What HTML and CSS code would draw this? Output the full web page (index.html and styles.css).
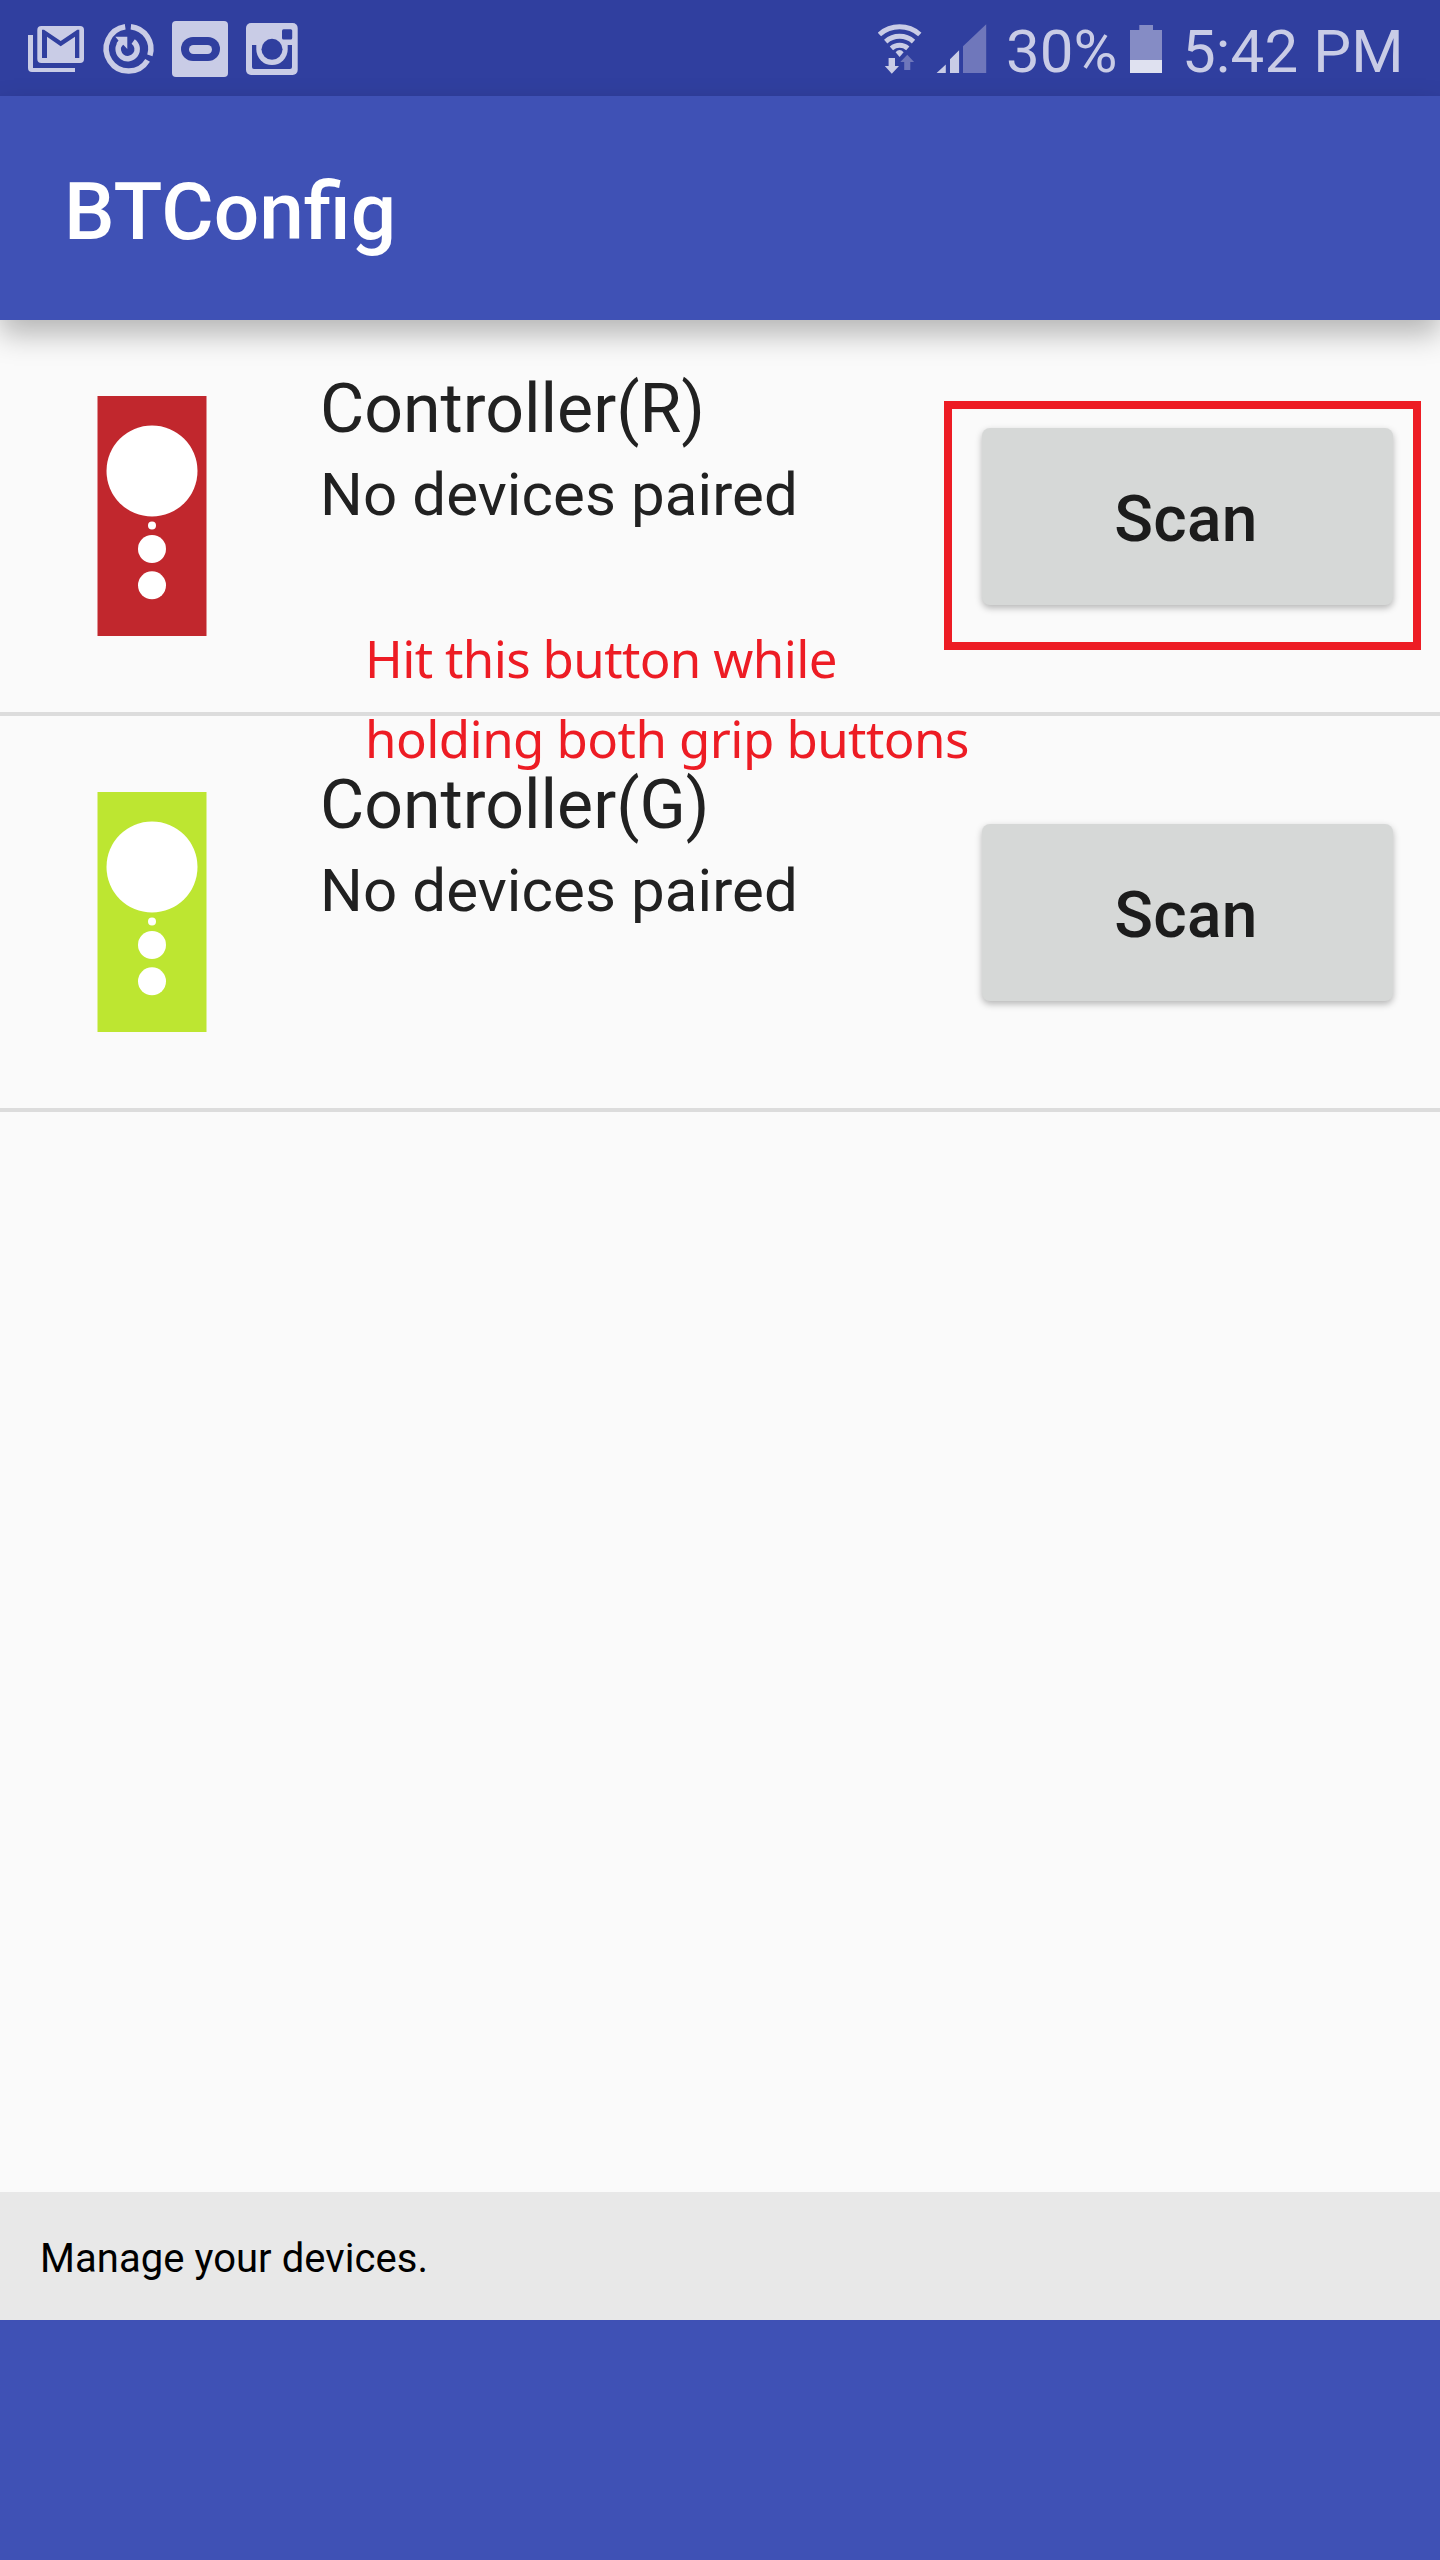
FILE: index.html
```html
<!DOCTYPE html>
<html lang="en">
<head>
<meta charset="utf-8">
<title>BTConfig</title>
<link rel="stylesheet" href="styles.css">
</head>
<body>
<div class="screen">
  <div class="status-bar">
    <div class="notifications">
      <svg class="icon" width="60" height="60" viewBox="26 19 60 60">
        <path class="lit" d="M28 35h5v33h42v4H32a4 4 0 0 1-4-4z"/>
        <rect class="lit" x="37.3" y="26" width="46.7" height="37" rx="4"/>
        <path class="ground" d="M42 29.7h2L60.7 41l16.600-11.300h2V58H75V36.700L60.700 46.300 47 36.700V58h-5z"/>
      </svg>
      <svg class="icon" width="60" height="60" viewBox="98 19 60 60">
        <path class="ring" d="M130.900 26.700a22.300 22.300 0 0 1 19 28.700M147.600 60.300A22.300 22.300 0 1 1 125.200 26.700"/>
        <path class="ring" d="M133.200 41.400A9.500 9.500 0 1 1 119.900 43.700"/>
        <path class="lit" d="M115.300 36.700h12v12.200l-4-4.200-3.300 3-3.500-4.500 2-2.700z"/>
      </svg>
      <svg class="icon" width="60" height="60" viewBox="170 19 60 60">
        <rect class="lit" x="172" y="21" width="56" height="56" rx="4"/>
        <rect class="ground" x="181" y="37" width="39" height="24" rx="12"/>
        <rect class="lit" x="189" y="45" width="23" height="9" rx="4.500"/>
      </svg>
      <svg class="icon" width="60" height="60" viewBox="242 19 60 60">
        <rect class="lit" x="246" y="23" width="51.700" height="52" rx="5"/>
        <path class="ground" d="M252 45h40v22a2 2 0 0 1-2 2h-36a2 2 0 0 1-2-2z"/>
        <path class="lit" d="M256.300 45h31.400v4.300a15.700 15.700 0 0 1-31.400 0z"/>
        <circle class="ground" cx="272" cy="49.300" r="10.500"/>
        <rect class="ground" x="282" y="29.300" width="10.200" height="10.200" rx="1.500"/>
      </svg>
    </div>
    <div class="system">
      <svg class="icon" width="112" height="60" viewBox="878 19 112 60">
        <path class="wifi" d="M879.400 34.500a30.500 30.500 0 0 1 40.400 0M885.700 41.600a21 21 0 0 1 27.800 0M891.400 48.400a12.600 12.600 0 0 1 16.400 0"/>
        <path class="lit" d="M899.600 57l-4-4.800q4-4.600 8 0z"/>
        <path class="lit" d="M888.600 58h6.400v8h4l-7.200 7.700-7-7.700h3.800z"/>
        <path class="faint" d="M904.200 70h6.100v-8h3.800l-6.800-7.200-7 7.200h3.900z"/>
        <path class="lit" d="M936.600 73l9.200-8.500V73zM950 73V59.300l9.100-9V73z"/>
        <path class="faint" d="M963 73V46.300l23.200-22V73z"/>
      </svg>
      <span class="percent">30%</span>
      <svg class="icon battery" width="32" height="60" viewBox="1130 19 32 60">
        <path class="cell" d="M1130 30h9.300v-5h13.700v5h9v30h-32z"/>
        <path class="charge" d="M1130 60h32v13h-32z"/>
      </svg>
      <span class="clock">5:42 PM</span>
    </div>
  </div>
  <header class="app-bar"><h1 class="title">BTConfig</h1></header>
  <main class="list">
    <section class="row">
      <svg class="controller red" width="110" height="240" viewBox="0 0 110 240">
        <rect x=".5" width="109" height="240"/>
        <g class="hole"><circle cx="55" cy="75" r="45.500"/><circle cx="55" cy="129.600" r="4"/><circle cx="55" cy="153" r="14"/><circle cx="55" cy="189.300" r="14"/></g>
      </svg>
      <div class="info">
        <div class="name">Controller(R)</div>
        <div class="state">No devices paired</div>
      </div>
      <button class="scan" type="button">Scan</button>
      <div class="highlight"></div>
      <p class="note"><span class="note-line first">Hit this button while</span><span class="note-line second">holding both grip buttons</span></p>
    </section>
    <section class="row">
      <svg class="controller green" width="110" height="240" viewBox="0 0 110 240">
        <rect x=".5" width="109" height="240"/>
        <g class="hole"><circle cx="55" cy="75" r="45.500"/><circle cx="55" cy="129.600" r="4"/><circle cx="55" cy="153" r="14"/><circle cx="55" cy="189.300" r="14"/></g>
      </svg>
      <div class="info">
        <div class="name">Controller(G)</div>
        <div class="state">No devices paired</div>
      </div>
      <button class="scan" type="button">Scan</button>
    </section>
  </main>
  <div class="hint">Manage your devices.</div>
  <footer class="bottom-bar"></footer>
</div>
</body>
</html>
```
FILE: styles.css
```css
* { box-sizing: border-box; }
body { margin: 0; font-family: Roboto, sans-serif; }
.screen {
  width: 1440px;
  height: 2560px;
  display: flex;
  flex-direction: column;
  overflow: hidden;
  background: #fafafa;
}
.status-bar {
  height: 96px;
  flex: none;
  display: flex;
  justify-content: space-between;
  padding: 0 37px 0 26px;
  background: #303f9f;
  color: #c9cce6;
  font-size: 60px;
  line-height: 103px;
  white-space: nowrap;
}
.notifications { display: flex; gap: 12px; padding-top: 19px; }
.system { display: flex; align-items: flex-start; }
.system .icon { margin-top: 19px; }
.icon { display: block; flex: none; }
.lit { fill: #c9cce6; }
.ground { fill: #303f9f; }
.faint { fill: #6f77bb; }
.ring { fill: none; stroke: #c9cce6; stroke-width: 5.5; }
.wifi { fill: none; stroke: #c9cce6; stroke-width: 5; }
.cell { fill: #858cc5; }
.charge { fill: #dfe1f0; }
.percent { width: 124px; margin-left: 16px; }
.clock { width: 221px; margin-left: 20px; letter-spacing: .15px; }
.app-bar {
  height: 224px;
  flex: none;
  display: flex;
  align-items: center;
  padding: 7px 64px 0;
  background: #3f51b5;
  box-shadow: 0 14px 28px rgba(0, 0, 0, .28);
  position: relative;
}
.title { margin: 0; font-size: 80.2px; line-height: 96px; font-weight: 500; color: #fff; }
.list { flex: 1; }
.row {
  height: 396px;
  display: flex;
  align-items: flex-start;
  padding-left: 97px;
  border-bottom: 4px solid #dcdcdc;
  position: relative;
}
.controller { display: block; flex: none; margin-top: 76px; }
.red { fill: #c1272d; }
.green { fill: #bde631; }
.hole { fill: #fff; }
.info { width: 662px; margin: 49px 0 0 113px; color: #212121; }
.name { font-size: 68px; line-height: 80px; }
.state { font-size: 60px; line-height: 70px; margin-top: 10.5px; letter-spacing: .1px; }
.scan {
  width: 411px;
  height: 177px;
  margin-top: 107.500px;
  padding: 8px 3px 0 0;
  border: 0;
  border-radius: 8px;
  background: #d6d8d7;
  box-shadow: 0 3px 7px rgba(0, 0, 0, .28);
  color: #1c1c1c;
  font: 500 64px/76px Roboto, sans-serif;
  letter-spacing: .3px;
}
/* Callout drawn over the list */
.highlight {
  position: absolute;
  left: 944px;
  top: 81px;
  width: 477px;
  height: 249px;
  border: 8px solid #ed1c24;
}
.note {
  position: absolute;
  left: 365px;
  top: 298px;
  margin: 0;
  z-index: 1;
  color: #ed1c24;
  font: 51px/80px "Noto Sans", sans-serif;
  white-space: nowrap;
}
.note-line { display: block; }
.first { letter-spacing: -.65px; }
.second { letter-spacing: -.58px; }
.hint {
  height: 128px;
  flex: none;
  padding: 3px 40px 0;
  background: #e8e8e8;
  color: #000;
  font-size: 40px;
  line-height: 128px;
  letter-spacing: .05px;
}
.bottom-bar { height: 240px; flex: none; background: #3f51b5; }
```
